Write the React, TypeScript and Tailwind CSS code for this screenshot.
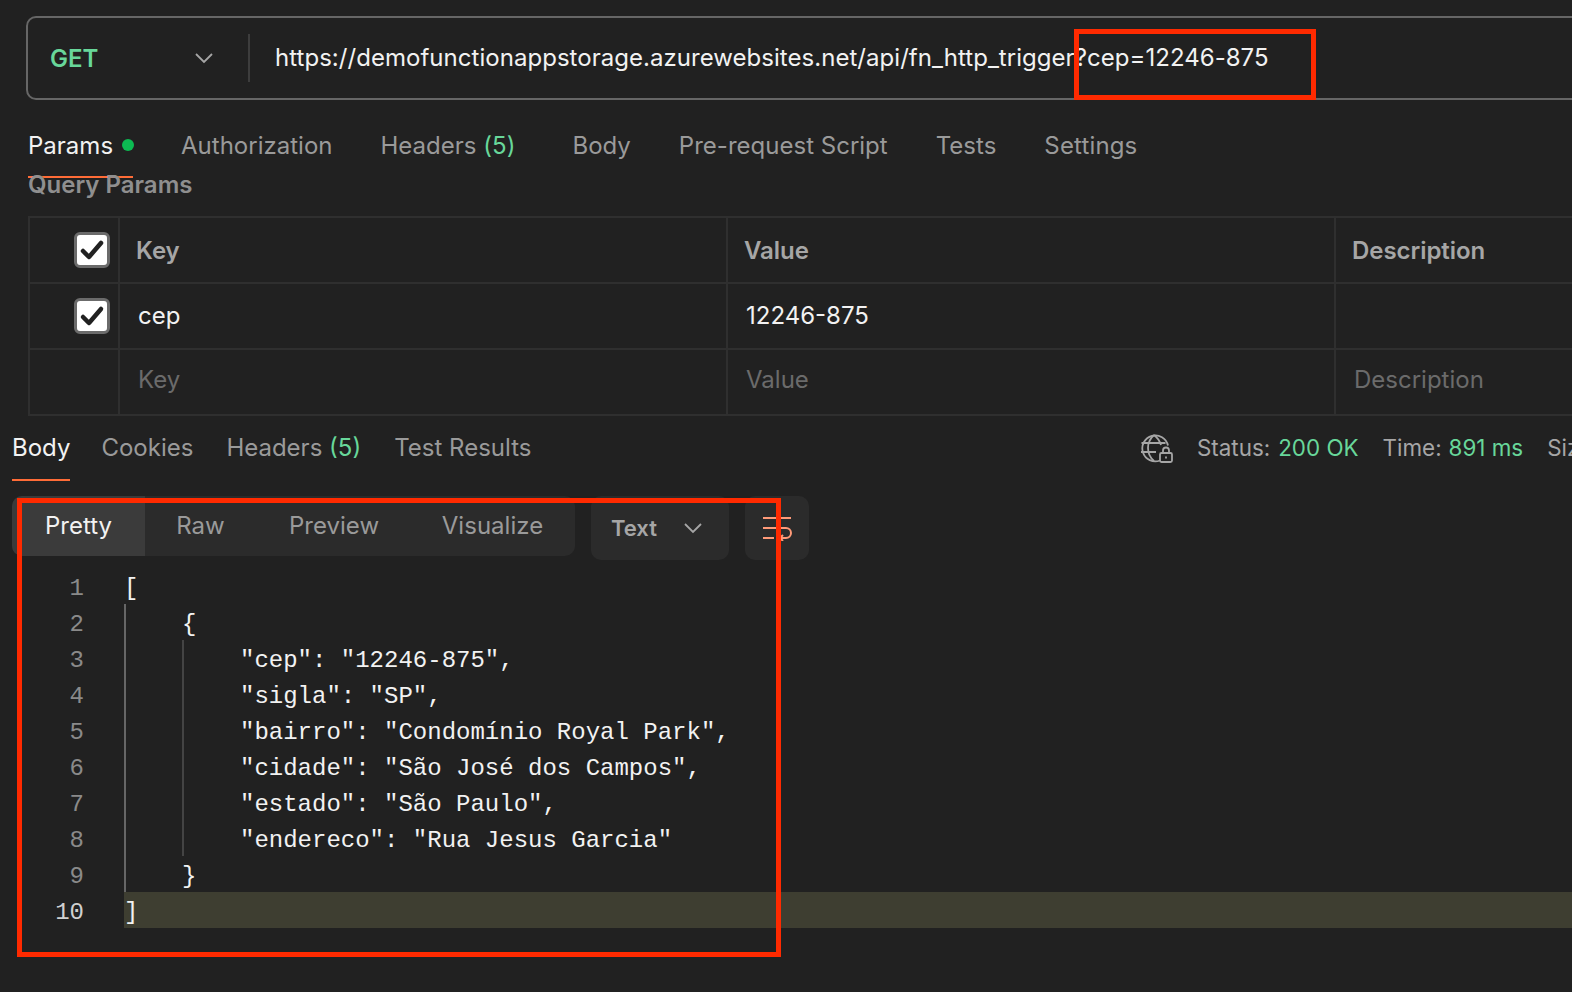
function Check() {
  return (
    <div className="flex h-[36px] w-[36px] items-center justify-center rounded-[6px] border-[3px] border-[#6b6b6b] bg-white">
      <svg width="26" height="26" viewBox="0 0 26 26" fill="none" stroke="#212121" strokeWidth="4.5" strokeLinecap="round" strokeLinejoin="round">
        <path d="M4 14l6 6L22 6" />
      </svg>
    </div>
  );
}

function Chevron() {
  return (
    <svg width="18" height="11" viewBox="0 0 18 11" fill="none" stroke="#a6a6a6" strokeWidth="1.8">
      <path d="M1 1l8 8 8-8" />
    </svg>
  );
}

function Row({ c1, c2, c3, c4, header, pl }: { c1?: React.ReactNode; c2: React.ReactNode; c3: React.ReactNode; c4?: React.ReactNode; header?: boolean; pl?: boolean }) {
  const text = `${header ? "pl-[16px] pt-[2px] font-semibold tracking-[-0.05px] text-[#a6a6a6]" : "pl-[18px]"} ${pl ? "pb-[4px] text-[#6b6b6b]" : ""}`;
  return (
    <div className="flex h-[66px] border-b-2 border-[#2f2f2f]">
      <div className="flex w-[90px] shrink-0 items-center justify-end border-r-2 border-[#2f2f2f] pr-[8px]">{c1}</div>
      <div className={`flex w-[608px] shrink-0 items-center border-r-2 border-[#2f2f2f] ${text}`}>{c2}</div>
      <div className={`flex w-[608px] shrink-0 items-center border-r-2 border-[#2f2f2f] ${text}`}>{c3}</div>
      <div className={`flex flex-1 items-center whitespace-nowrap ${text}`}>{c4}</div>
    </div>
  );
}

function CodeLine({ children }: { children?: React.ReactNode }) {
  return <div className="h-[36px] whitespace-pre leading-[42px]">{children}</div>;
}

export default function App() {
  return (
    <div className="relative h-[992px] w-[1572px] overflow-hidden bg-[#212121] text-[24px] text-[#f2f2f2] [font-family:Inter,sans-serif]">
      {/* Request area */}
      <div className="pl-[26px] pt-[16px]">
        <div className="flex h-[84px] w-[1600px] items-center rounded-[10px] border-2 border-[#666666]">
          <div className="flex h-[48px] w-[222px] shrink-0 items-center justify-between border-r-2 border-[#3d3d3d] pl-[22px] pr-[35px]">
            <span className="pt-[2px] font-semibold text-[#68d79a]">GET</span>
            <Chevron />
          </div>
          <div className="whitespace-nowrap pl-[25px] tracking-[0.037px]">https://demofunctionappstorage.azurewebsites.net/api/fn_http_trigger?cep=12246-875</div>
        </div>
      </div>

      {/* Request tabs */}
      <div className="mt-[20px] flex h-[58px] items-start gap-[48px] pl-[28px] pt-[8px] tracking-[0.01px] text-[#9a9a9a]">
        <div className="-mt-[8px] flex h-[58px] w-[105px] items-start gap-[9px] border-b-2 border-[#ff6c37] pt-[8px] text-[#f2f2f2]">
          <span>Params</span>
          <span className="mt-[11px] h-[12px] w-[12px] shrink-0 rounded-full bg-[#0cbb52]" />
        </div>
        <span>Authorization</span>
        <span className="mr-[9px]">Headers <span className="text-[#68d79a]">(5)</span></span>
        <span>Body</span>
        <span>Pre-request Script</span>
        <span>Tests</span>
        <span className="tracking-[0.15px]">Settings</span>
      </div>

      {/* Query params */}
      <div className="-mt-[5px] pl-[28px] font-semibold leading-[24px] text-[#8f8f8f]">Query Params</div>

      <div className="ml-[28px] mt-[19px] w-[1600px] border-l-2 border-t-2 border-[#2f2f2f]">
        <Row header c1={<Check />} c2="Key" c3="Value" c4="Description" />
        <Row c1={<Check />} c2="cep" c3="12246-875" />
        <Row pl c2="Key" c3="Value" c4="Description" />
      </div>

      {/* Response tabs */}
      <div className="flex h-[65px] items-start pl-[12px] text-[#9a9a9a]">
        <div className="flex w-[1127px] shrink-0 items-start gap-[33px]">
          <div className="-mr-[2px] flex h-[65px] items-start border-b-2 border-[#ff6c37] pt-[14px] text-[#f2f2f2]">Body</div>
          <span className="pt-[14px]">Cookies</span>
          <span className="pt-[14px]">Headers <span className="text-[#68d79a]">(5)</span></span>
          <span className="pt-[14px]">Test Results</span>
        </div>
        <div className="flex items-center whitespace-nowrap pt-[15px] text-[22.4px]">
          <svg width="34" height="30" viewBox="0 0 34 30" fill="none" stroke="#a6a6a6" strokeWidth="1.8" className="mr-[24px]">
            <path d="M21 27.5a13 13 0 1 1 8-15" />
            <path d="M15 2c-8 7-8 19 0 26M15 2c4 3 6 7 7 10M2.5 10h24M2 19h15" />
            <rect x="21" y="20" width="12" height="9" rx="1.5" />
            <path d="M24 20v-2.5a3 3 0 0 1 6 0V20" />
            <path d="M27 23.5v2" />
          </svg>
          <span className="text-[#a6a6a6]">Status:</span>
          <span className="ml-[8px] text-[#68d79a]">200 OK</span>
          <span className="ml-[24px] text-[#a6a6a6]">Time:</span>
          <span className="ml-[7px] text-[#68d79a]">891 ms</span>
          <span className="ml-[24px] text-[#a6a6a6]">Size:</span>
        </div>
      </div>

      {/* Response toolbar */}
      <div className="ml-[12px] mt-[15px] flex items-start">
        <div className="flex h-[60px] w-[563px] overflow-hidden rounded-[10px] bg-[#2b2b2b] tracking-[0.02px] text-[#9a9a9a]">
          <div className="flex w-[133px] items-center justify-center bg-[#3b3b3b] text-[#f2f2f2]">Pretty</div>
          <div className="flex w-[111px] items-center justify-center">Raw</div>
          <div className="flex w-[156px] items-center justify-center">Preview</div>
          <div className="flex flex-1 items-center justify-center pr-[2px]">Visualize</div>
        </div>
        <div className="ml-[16px] flex h-[64px] w-[138px] items-center justify-between rounded-[10px] bg-[#2b2b2b] pl-[20px] pr-[27px] text-[22px] font-semibold text-[#a6a6a6]">
          <span>Text</span>
          <Chevron />
        </div>
        <div className="ml-[16px] flex h-[64px] w-[64px] items-center justify-center rounded-[10px] bg-[#2b2b2b]">
          <svg width="30" height="26" viewBox="0 0 30 26" fill="none" stroke="#ff9a78" strokeWidth="2">
            <path d="M1 3h28M1 13h19M1 23h11" />
            <path d="M20 13h4a5 5 0 0 1 0 10h-6" />
            <path d="M21 20l-3 3 3 3" />
          </svg>
        </div>
      </div>

      {/* Code */}
      <div className="mt-[8px] flex text-[24px] [font-family:'Liberation_Mono',monospace]">
        <div className="w-[84px] shrink-0 text-right text-[#8a8a8a]">
          {["1", "2", "3", "4", "5", "6", "7", "8", "9"].map((n) => (
            <CodeLine key={n}>{n}</CodeLine>
          ))}
          <div className="h-[36px] leading-[42px] text-[#d0d0d0]">10</div>
        </div>
        <div className="ml-[40px] flex-1 text-[#f2f2f2]">
          <CodeLine>[</CodeLine>
          <div className="border-l-2 border-[#666666] pl-[56px]">
            <CodeLine>{"{"}</CodeLine>
            <div className="border-l-2 border-[#444444] pl-[56px]">
              <CodeLine>{'"cep": "12246-875",'}</CodeLine>
              <CodeLine>{'"sigla": "SP",'}</CodeLine>
              <CodeLine>{'"bairro": "Condomínio Royal Park",'}</CodeLine>
              <CodeLine>{'"cidade": "São José dos Campos",'}</CodeLine>
              <CodeLine>{'"estado": "São Paulo",'}</CodeLine>
              <CodeLine>{'"endereco": "Rua Jesus Garcia"'}</CodeLine>
            </div>
            <CodeLine>{"}"}</CodeLine>
          </div>
          <div className="h-[36px] bg-[#3e3e31] leading-[42px]">]</div>
        </div>
      </div>

      {/* Annotation boxes */}
      <div className="absolute left-[1074px] top-[29px] h-[71px] w-[242px] border-[5px] border-[#ff2a00]" />
      <div className="absolute left-[17px] top-[498px] h-[459px] w-[764px] border-[5px] border-[#ff2a00]" />
    </div>
  );
}
